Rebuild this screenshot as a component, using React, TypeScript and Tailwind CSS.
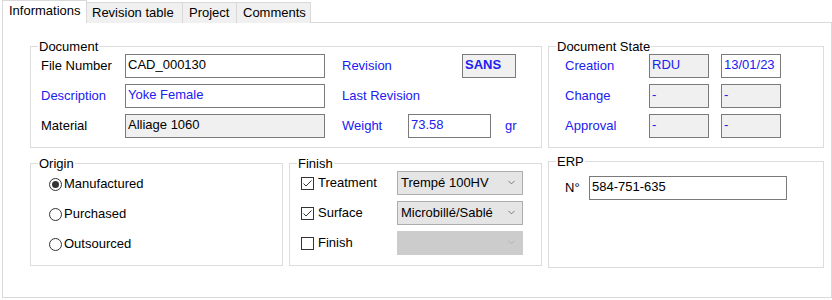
import { ChevronDown } from 'lucide-react';

const blue = 'text-[#2020f0]';

function TextBox({ value, className = '', gray = false, textClass = 'text-black' }: { value: string; className?: string; gray?: boolean; textClass?: string }) {
  return (
    <div
      className={`h-[24px] border border-[#7a7a7a] px-[2px] pb-[3px] flex items-center ${gray ? 'bg-[#f0f0f0]' : 'bg-white'} ${textClass} ${className}`}
    >
      {value}
    </div>
  );
}

function Group({ title, className = '', children }: { title: string; className?: string; children: React.ReactNode }) {
  return (
    <fieldset className={`border border-[#dcdcdc] ${className}`}>
      <legend className="ml-[7px] px-[1px] leading-[15px] text-black">{title}</legend>
      {children}
    </fieldset>
  );
}

function Radio({ checked, label }: { checked?: boolean; label: string }) {
  return (
    <div className="flex items-center h-[24px]">
      <span className="w-[13px] h-[13px] rounded-full border border-[#333] bg-white flex items-center justify-center">
        {checked && <span className="w-[7px] h-[7px] rounded-full bg-[#333]" />}
      </span>
      <span className="ml-[2px]">{label}</span>
    </div>
  );
}

function Check({ checked, label }: { checked?: boolean; label: string }) {
  return (
    <div className="flex items-center h-[24px] w-[96px]">
      <span className="w-[13px] h-[13px] border border-[#333] bg-white flex items-center justify-center">
        {checked && (
          <svg width="11" height="11" viewBox="0 0 11 11">
            <path d="M1.5 5.5 L4 8 L9.5 2.5" fill="none" stroke="#333" strokeWidth="1" />
          </svg>
        )}
      </span>
      <span className="ml-[4px]">{label}</span>
    </div>
  );
}

function Select({ value, disabled }: { value: string; disabled?: boolean }) {
  return (
    <div
      className={`h-[24px] w-[126px] flex items-center justify-between pl-[3px] pr-[5px] pb-[1px] border ${
        disabled ? 'bg-[#cccccc] border-[#cccccc]' : 'bg-[#e5e5e5] border-[#adadad]'
      }`}
    >
      <span>{value}</span>
      <ChevronDown className={`w-[11px] h-[11px] ${disabled ? 'text-[#a8a8a8]' : 'text-[#505050]'}`} strokeWidth={1.5} />
    </div>
  );
}

export default function App() {
  return (
    <div className="w-[832px] h-[300px] bg-white text-[13px] text-black font-['Liberation_Sans',Arial,sans-serif]">
      {/* Tabs */}
      <div className="flex h-[23px] items-end pl-[2px]">
        <div className="h-[23px] w-[85px] px-[6px] bg-white border-l border-t border-r border-[#d9d9d9] flex items-center pb-[2px]">
          Informations
        </div>
        <div className="h-[21px] w-[96px] px-[5px] bg-[#f0f0f0] border-t border-r border-[#d9d9d9] flex items-center">
          Revision table
        </div>
        <div className="h-[21px] w-[54px] px-[6px] bg-[#f0f0f0] border-t border-r border-[#d9d9d9] flex items-center">
          Project
        </div>
        <div className="h-[21px] w-[74px] px-[6px] bg-[#f0f0f0] border-t border-r border-[#d9d9d9] flex items-center">
          Comments
        </div>
        <div className="flex-1 border-b border-[#d9d9d9]" />
      </div>

      {/* Page */}
      <div className="ml-[2px] h-[275px] border-l border-r border-b border-[#d9d9d9] pl-[27px] pt-[16px]">
        <div className="flex gap-[6px]">
          <Group title="Document" className="w-[512px] h-[109px]">
            <div className="flex flex-col gap-[6px] pl-[10px]">
              <div className="flex items-center">
                <span className="w-[84px]">File Number</span>
                <TextBox value="CAD_000130" className="w-[200px]" />
                <span className={`ml-[17px] w-[120px] ${blue}`}>Revision</span>
                <TextBox value="SANS" gray className="w-[54px] font-bold" textClass={blue} />
              </div>
              <div className="flex items-center">
                <span className={`w-[84px] ${blue}`}>Description</span>
                <TextBox value="Yoke Female" className="w-[200px]" textClass={blue} />
                <span className={`ml-[17px] ${blue}`}>Last Revision</span>
              </div>
              <div className="flex items-center">
                <span className="w-[84px]">Material</span>
                <TextBox value="Alliage 1060" gray className="w-[200px]" />
                <span className={`ml-[17px] w-[66px] ${blue}`}>Weight</span>
                <TextBox value="73.58" className="w-[83px]" textClass={blue} />
                <span className={`ml-[14px] ${blue}`}>gr</span>
              </div>
            </div>
          </Group>

          <Group title="Document State" className="w-[276px] h-[109px]">
            <div className="flex flex-col gap-[6px] pl-[16px]">
              {[
                ['Creation', 'RDU', '13/01/23'],
                ['Change', '-', '-'],
                ['Approval', '-', '-'],
              ].map(([l, a, b], i) => (
                <div key={l} className="flex items-center">
                  <span className={`w-[84px] ${blue}`}>{l}</span>
                  <TextBox value={a} gray className="w-[60px]" textClass={blue} />
                  <TextBox value={b} gray={i > 0} className="w-[60px] ml-[12px]" textClass={blue} />
                </div>
              ))}
            </div>
          </Group>
        </div>

        <div className="flex gap-[6px] mt-[8px]">
          <Group title="Origin" className="w-[253px] h-[110px]">
            <div className="flex flex-col gap-[6px] pt-[1px] pl-[18px]">
              <Radio checked label="Manufactured" />
              <Radio label="Purchased" />
              <Radio label="Outsourced" />
            </div>
          </Group>

          <Group title="Finish" className="w-[253px] h-[110px]">
            <div className="flex flex-col gap-[6px] pl-[11px]">
              <div className="flex items-center">
                <Check checked label="Treatment" />
                <Select value="Trempé 100HV" />
              </div>
              <div className="flex items-center">
                <Check checked label="Surface" />
                <Select value="Microbillé/Sablé" />
              </div>
              <div className="flex items-center">
                <Check label="Finish" />
                <Select value="" disabled />
              </div>
            </div>
          </Group>

          <Group title="ERP" className="w-[276px] h-[114px] -mt-[2px]">
            <div className="flex items-center pt-[7px] pl-[16px]">
              <span className="w-[24px]">N°</span>
              <TextBox value="584-751-635" className="w-[198px]" />
            </div>
          </Group>
        </div>
      </div>
    </div>
  );
}
